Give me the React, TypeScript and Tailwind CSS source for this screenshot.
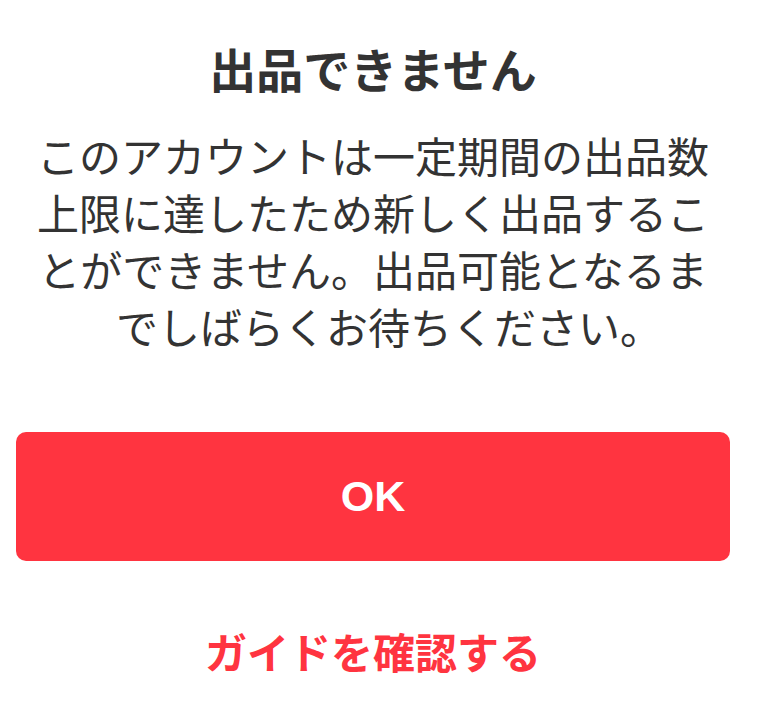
import React from "react";

export default function App() {
  const font = { fontFamily: '"Noto Sans CJK JP", "Noto Sans", sans-serif' };
  return (
    <div className="w-[764px] h-[715px] bg-white overflow-hidden pr-[18px]" style={font}>
      <div className="w-[746px] flex flex-col items-center">
        <h1 className="mt-[38px] text-[47px] leading-[60px] font-bold text-[#333333] text-center">出品できません</h1>
        <div className="mt-[28px] text-[42px] leading-[57px] text-[#333333] text-center">
          <div>このアカウントは一定期間の出品数</div>
          <div>上限に達したため新しく出品するこ</div>
          <div>とができません。出品可能となるま</div>
          <div className="pl-[32px]">でしばらくお待ちください。</div>
        </div>
        <button
          className="mt-[78px] w-[714px] h-[129px] rounded-[10px] bg-[#ff3440] text-white text-[43px] font-bold flex items-center justify-center"
          style={{ fontFamily: '"Liberation Sans", Arial, sans-serif' }}
        >
          OK
        </button>
        <div className="mt-[60px] text-[42px] leading-[60px] font-bold text-[#ff3440] text-center">ガイドを確認する</div>
      </div>
    </div>
  );
}
